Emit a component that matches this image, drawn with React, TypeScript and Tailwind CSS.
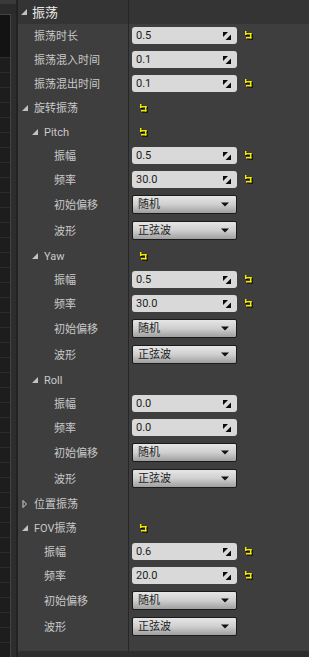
import React from 'react';

type Row =
  | { t: 'group'; level: number; label: string; open: boolean; reset?: boolean }
  | { t: 'num'; level: number; label: string; value: string; reset?: boolean }
  | { t: 'drop'; level: number; label: string; value: string };

const axis = (name: string, amp: string, freq: string, reset: boolean): Row[] => [
  { t: 'group', level: 1, label: name, open: true, reset },
  { t: 'num', level: 2, label: '振幅', value: amp, reset },
  { t: 'num', level: 2, label: '频率', value: freq, reset },
  { t: 'drop', level: 2, label: '初始偏移', value: '随机' },
  { t: 'drop', level: 2, label: '波形', value: '正弦波' },
];

const rows: Row[] = [
  { t: 'num', level: 0, label: '振荡时长', value: '0.5', reset: true },
  { t: 'num', level: 0, label: '振荡混入时间', value: '0.1' },
  { t: 'num', level: 0, label: '振荡混出时间', value: '0.1', reset: true },
  { t: 'group', level: 0, label: '旋转振荡', open: true, reset: true },
  ...axis('Pitch', '0.5', '30.0', true),
  ...axis('Yaw', '0.5', '30.0', true),
  ...axis('Roll', '0.0', '0.0', false),
  { t: 'group', level: 0, label: '位置振荡', open: false },
  { t: 'group', level: 0, label: 'FOV振荡', open: true, reset: true },
  { t: 'num', level: 1, label: '振幅', value: '0.6', reset: true },
  { t: 'num', level: 1, label: '频率', value: '20.0', reset: true },
  { t: 'drop', level: 1, label: '初始偏移', value: '随机' },
  { t: 'drop', level: 1, label: '波形', value: '正弦波' },
];

const indent = ['pl-[4px]', 'pl-[14px]', 'pl-[24px]'];

const FONT = { fontFamily: "Roboto, 'Noto Sans CJK SC', sans-serif" };

function Tri({ open }: { open: boolean }) {
  return open ? (
    <svg width="6" height="6" viewBox="0 0 6 6">
      <polygon points="6,0 6,6 0,6" fill="#c2c2c2" />
    </svg>
  ) : (
    <svg width="6" height="8" viewBox="0 0 6 8">
      <polygon points="1,0.5 4.5,4 1,7.5" fill="none" stroke="#cfcfcf" strokeWidth="1" />
    </svg>
  );
}

function Reset() {
  return (
    <svg width="9" height="9" viewBox="0 0 9 9" className="shrink-0">
      <g fill="#000">
        <rect x="1" y="1" width="1.5" height="4" />
        <rect x="1" y="3" width="6.5" height="1.5" />
        <rect x="6" y="3" width="1.5" height="5.5" />
        <rect x="2" y="7" width="5.5" height="1.5" />
      </g>
      <g fill="#f4ec00">
        <rect x="0" y="0" width="1.5" height="4" />
        <rect x="0" y="2" width="6.5" height="1.5" />
        <rect x="5" y="2" width="1.5" height="5.5" />
        <rect x="1" y="6" width="5.5" height="1.5" />
      </g>
    </svg>
  );
}

function Spin() {
  return (
    <svg width="8" height="8" viewBox="0 0 8 8" className="shrink-0">
      <polygon points="0,0 5,0 0,5" fill="#0a0a0a" />
      <polygon points="8,2.5 8,8 2.5,8" fill="#0a0a0a" />
    </svg>
  );
}

function Arrow() {
  return (
    <svg width="8" height="5" viewBox="0 0 8 5" className="shrink-0">
      <polygon points="0,0.5 8,0.5 4,4.5" fill="#111" />
    </svg>
  );
}

function Label({ row }: { row: Row }) {
  const isGroup = row.t === 'group';
  return (
    <div
      className={`w-[111px] shrink-0 h-full border-r border-[#262626] flex items-center ${indent[row.level]}`}
    >
      <div className="w-[12px] shrink-0 flex items-center">
        {isGroup ? <Tri open={(row as { open: boolean }).open} /> : null}
      </div>
      <span className="text-[11px] leading-none text-[#c9c9c9] whitespace-nowrap">{row.label}</span>
    </div>
  );
}

function RowView({ row }: { row: Row }) {
  if (row.t === 'group') {
    return (
      <div className="flex h-[24px]">
        <Label row={row} />
        <div className="flex items-center pl-[11px]">{row.reset ? <Reset /> : null}</div>
      </div>
    );
  }
  if (row.t === 'num') {
    return (
      <div className="flex h-[24px]">
        <Label row={row} />
        <div className="flex items-start pt-[3px] pl-[3px]">
          <div className="w-[105px] h-[17px] rounded-[3px] bg-[#d9d9d9] flex items-center justify-between pl-[4px] pr-[6px]">
            <span className="text-[11px] leading-none text-[#1c1c1c]">{row.value}</span>
            <Spin />
          </div>
          <div className="h-[17px] flex items-center pl-[8px]">{row.reset ? <Reset /> : null}</div>
        </div>
      </div>
    );
  }
  return (
    <div className="flex h-[26px]">
      <Label row={row} />
      <div className="flex items-start pt-[3px] pl-[3px]">
        <div className="w-[105px] h-[19px] rounded-[2px] border border-[#1b1b1b] bg-gradient-to-b from-[#e6e6e6] via-[#cfcfcf] to-[#9f9f9f] flex items-center justify-between pl-[5px] pr-[7px]">
          <span className="text-[11px] leading-none text-[#1c1c1c]">{row.value}</span>
          <Arrow />
        </div>
      </div>
    </div>
  );
}

export default function App() {
  const lines = Array.from({ length: 40 });
  return (
    <div className="w-[309px] h-[657px] flex overflow-hidden bg-[#3e3e3e]" style={FONT}>
      {/* left strip */}
      <div className="w-[16px] shrink-0 flex flex-col">
        <div className="h-[18px] bg-[#3a3a3a]" />
        <div className="h-[40px] bg-[#2b2b2b]" />
        <div className="flex-1 flex">
          <div className="w-[11px] border-t border-r border-[#444] bg-[#131313] flex flex-col pt-[42px] overflow-hidden">
            <div className="flex flex-col bg-[#1d1d1d]">
              {lines.map((_, i) => (
                <div key={i} className="h-[15px] shrink-0 border-t border-[#2c2c2c]" />
              ))}
            </div>
          </div>
          <div className="flex-1 bg-[#2d2d2d]" />
        </div>
      </div>
      <div className="w-[2px] shrink-0 bg-[#222]" />

      {/* main panel */}
      <div className="flex-1 flex flex-col">
        <div className="flex h-[24px] bg-[#343434]">
          <div className="w-[111px] shrink-0 h-full border-r border-[#262626] flex items-center pl-[3px]">
            <div className="w-[11px] shrink-0 flex items-center">
              <Tri open />
            </div>
            <span className="text-[13px] leading-none text-[#e8e8e8]">振荡</span>
          </div>
        </div>
        {rows.map((r, i) => (
          <RowView key={i} row={r} />
        ))}
        <div className="flex-1 flex">
          <div className="w-[111px] shrink-0 border-r border-[#262626]" />
        </div>
        <div className="h-[6px] bg-[#2e2e2e] rounded-tl-[3px]" />
      </div>
    </div>
  );
}
